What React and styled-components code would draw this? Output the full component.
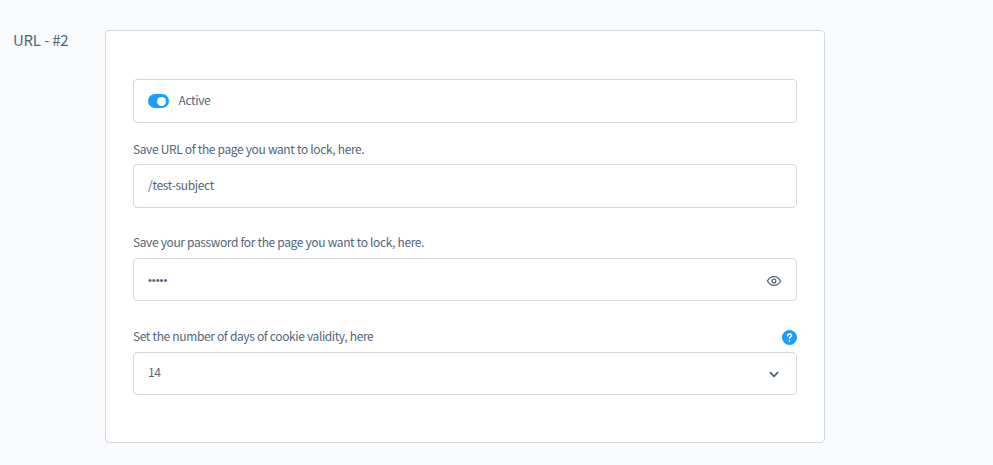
import React from 'react';
import styled, { createGlobalStyle } from 'styled-components';

const GlobalStyle = createGlobalStyle`
  * { box-sizing: border-box; }
  body {
    margin: 0;
    background: #f9fafc;
    color: #52667a;
    font-family: "Noto Sans CJK SC", "Open Sans", sans-serif;
    font-size: 12px;
    letter-spacing: -0.4px;
    word-spacing: 0.27px;
  }
`;

const Page = styled.main`
  display: grid;
  grid-template-columns: 92px 720px;
  align-items: start;
  min-height: 465px;
  padding: 30px 0 0 13px;
`;

const Title = styled.h1`
  margin: 0;
  font-size: 15px;
  font-weight: 400;
  letter-spacing: -0.3px;
  line-height: 20px;
  white-space: nowrap;
`;

const Card = styled.section`
  height: 413px;
  padding: 48px 27px 0;
  background: #fff;
  border: 1px solid #d1d9e0;
  border-radius: 4px;
`;

const Field = styled.div`
  margin-top: ${(p) => p.$gap}px;
`;

const LabelRow = styled.div`
  display: flex;
  align-items: center;
  justify-content: space-between;
  height: 18px;
  margin-bottom: ${(p) => p.$space}px;
  line-height: 18px;
`;

const Label = styled.label`
  white-space: nowrap;
`;

const Box = styled.div`
  display: flex;
  align-items: center;
  height: ${(p) => p.$height}px;
  padding: 0 14px;
  background: #fff;
  border: 1px solid #d1d9e0;
  border-radius: 4px;
`;

const Value = styled.span`
  flex: 1;
  padding-bottom: ${(p) => p.$lift ?? 2}px;
  letter-spacing: -0.34px;
  line-height: 18px;
`;

const Password = styled(Value)`
  padding-bottom: 0;
  font-family: "Liberation Sans", sans-serif;
  font-size: 11px;
  letter-spacing: 0;
`;

const Toggle = styled.span`
  display: flex;
  align-items: center;
  justify-content: flex-end;
  width: 21px;
  height: 14px;
  margin-right: 9.5px;
  padding-right: 3px;
  background: #189eff;
  border-radius: 7px;
`;

const Knob = styled.span`
  width: 9px;
  height: 9px;
  background: #fff;
  border-radius: 50%;
`;

const Help = styled.span`
  display: flex;
  align-items: center;
  justify-content: center;
  width: 15px;
  height: 15px;
  margin-top: 2px;
  background: #189eff;
  border-radius: 50%;
`;

const Icon = styled.svg`
  display: block;
  margin-top: ${(p) => p.$drop || 0}px;
  fill: none;
  stroke: ${(p) => p.$color || '#52667a'};
  stroke-linecap: round;
  stroke-linejoin: round;
`;

export default function App() {
  return (
    <>
      <GlobalStyle />
      <Page>
        <Title>URL - #2</Title>
        <Card>
          <Box $height={44}>
            <Toggle role="switch" aria-checked="true"><Knob /></Toggle>
            <Value>Active</Value>
          </Box>
          <Field $gap={17}>
            <LabelRow $space={6}><Label>Save URL of the page you want to lock, here.</Label></LabelRow>
            <Box $height={44}><Value>/test-subject</Value></Box>
          </Field>
          <Field $gap={25}>
            <LabelRow $space={7}><Label>Save your password for the page you want to lock, here.</Label></LabelRow>
            <Box $height={43}>
              <Password>•••••</Password>
              <Icon $drop={2} width="16" height="12" viewBox="0 0 16 12" strokeWidth="1.3">
                <path d="M1.4 6C3 3.1 5.3 1.6 8 1.6S13 3.1 14.6 6C13 8.9 10.7 10.4 8 10.4S3 8.9 1.4 6Z" />
                <circle cx="8" cy="6" r="1.9" />
              </Icon>
            </Box>
          </Field>
          <Field $gap={26}>
            <LabelRow $space={7}>
              <Label>Set the number of days of cookie validity, here</Label>
              <Help>
                <Icon $color="#fff" width="15" height="15" viewBox="0 0 15 15" strokeWidth="1.6">
                  <path d="M5.6 5.7C5.7 4.6 6.4 4 7.5 4s1.9.6 1.9 1.6c0 1.4-1.9 1.4-1.9 2.7" />
                  <path d="M7.5 10.9v.1" />
                </Icon>
              </Help>
            </LabelRow>
            <Box $height={43}>
              <Value $lift={4}>14</Value>
              <Icon width="16" height="12" viewBox="0 0 16 12" strokeWidth="1.9">
                <path d="M4.4 4.7 8 8.3l3.6-3.6" />
              </Icon>
            </Box>
          </Field>
        </Card>
      </Page>
    </>
  );
}
